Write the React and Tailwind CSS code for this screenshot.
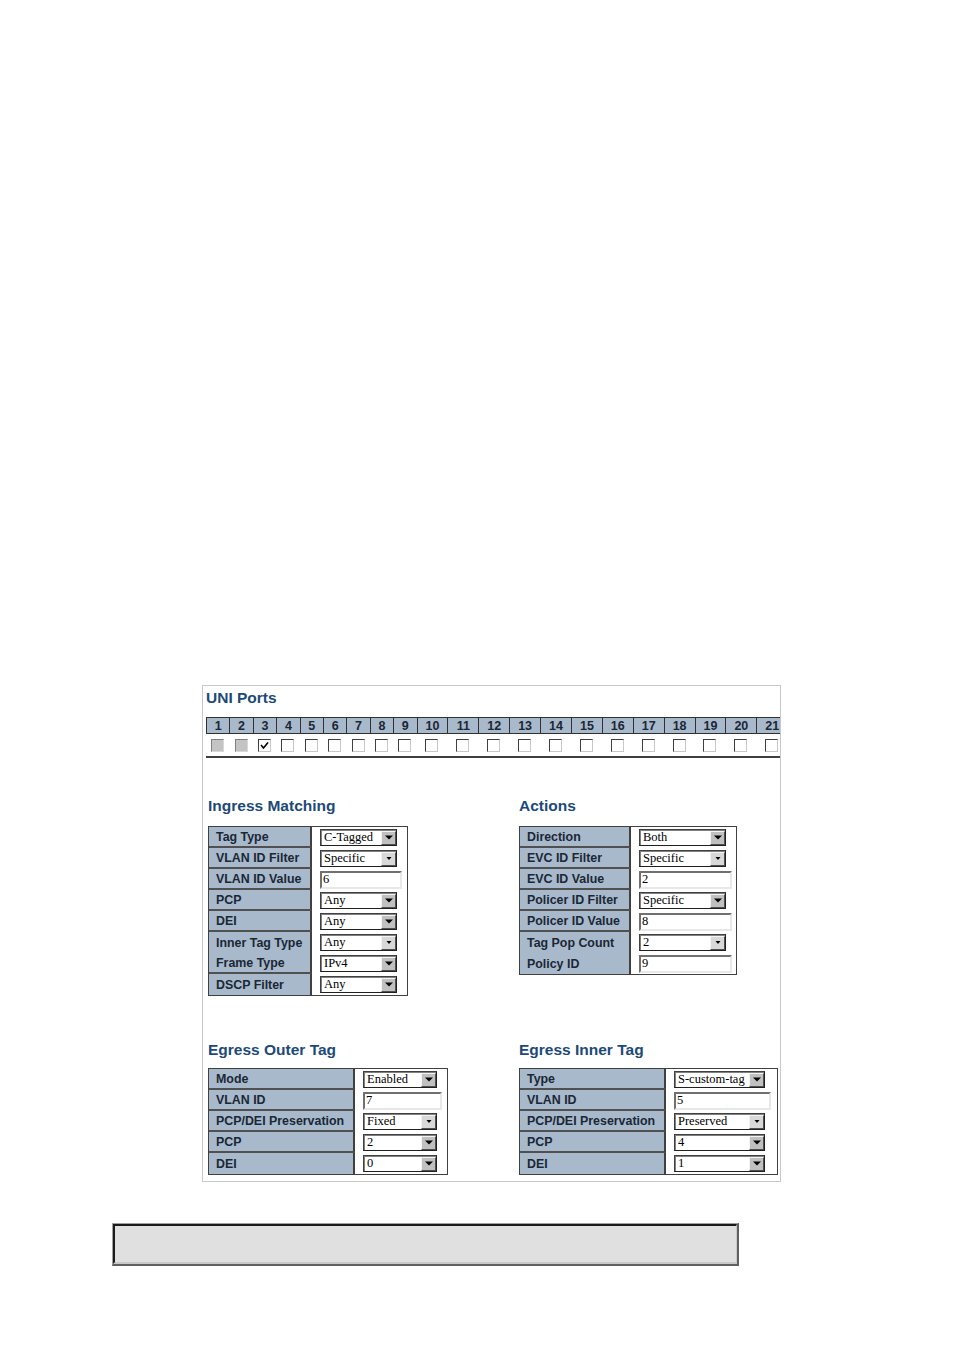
import React from 'react';

const ports = Array.from({ length: 21 }, (_, i) => i + 1);

const ingress = [
  { label: 'Tag Type', kind: 'select', value: 'C-Tagged' },
  { label: 'VLAN ID Filter', kind: 'select', value: 'Specific', light: true },
  { label: 'VLAN ID Value', kind: 'input', value: '6' },
  { label: 'PCP', kind: 'select', value: 'Any' },
  { label: 'DEI', kind: 'select', value: 'Any' },
  { label: 'Inner Tag Type', kind: 'select', value: 'Any', light: true, joined: true },
  { label: 'Frame Type', kind: 'select', value: 'IPv4' },
  { label: 'DSCP Filter', kind: 'select', value: 'Any' },
];

const actions = [
  { label: 'Direction', kind: 'select', value: 'Both' },
  { label: 'EVC ID Filter', kind: 'select', value: 'Specific', light: true },
  { label: 'EVC ID Value', kind: 'input', value: '2' },
  { label: 'Policer ID Filter', kind: 'select', value: 'Specific' },
  { label: 'Policer ID Value', kind: 'input', value: '8' },
  { label: 'Tag Pop Count', kind: 'select', value: '2', light: true, joined: true },
  { label: 'Policy ID', kind: 'input', value: '9' },
];

const egressOuter = [
  { label: 'Mode', kind: 'select', value: 'Enabled' },
  { label: 'VLAN ID', kind: 'input', value: '7' },
  { label: 'PCP/DEI Preservation', kind: 'select', value: 'Fixed', light: true },
  { label: 'PCP', kind: 'select', value: '2' },
  { label: 'DEI', kind: 'select', value: '0' },
];

const egressInner = [
  { label: 'Type', kind: 'select', value: 'S-custom-tag' },
  { label: 'VLAN ID', kind: 'input', value: '5' },
  { label: 'PCP/DEI Preservation', kind: 'select', value: 'Preserved', light: true },
  { label: 'PCP', kind: 'select', value: '4' },
  { label: 'DEI', kind: 'select', value: '1' },
];

function Checkbox({ state }) {
  if (state === 'disabled') {
    return <div className="w-[13px] h-[13px] bg-[#c4c4c4] border border-t-[#808080] border-l-[#808080] border-b-[#d8d8d8] border-r-[#d8d8d8]" />;
  }
  return (
    <div className="w-[13px] h-[13px] bg-white border border-t-[#404040] border-l-[#404040] border-b-[#c8c8c8] border-r-[#c8c8c8] flex items-center justify-center">
      {state === 'checked' && (
        <svg width="9" height="9" viewBox="0 0 9 9">
          <polyline points="1,4 3.5,7 8,1.5" fill="none" stroke="#000" strokeWidth="1.6" />
        </svg>
      )}
    </div>
  );
}

function Select({ value, light, width }) {
  return (
    <div className={`${width} h-[17px] flex items-center bg-white border border-t-[#404040] border-l-[#404040] border-b-[#202020] border-r-[#202020] shadow-[inset_1px_1px_0_#808080]`}>
      <span className="flex-1 pl-[3px] text-[12.5px] leading-[13px] text-black font-['Liberation_Serif',serif] whitespace-nowrap overflow-hidden">{value}</span>
      <div className={`w-[15px] h-[14px] shrink-0 flex items-center justify-center border border-t-[#f4f4f4] border-l-[#f4f4f4] border-b-[#505050] border-r-[#505050] ${light ? 'bg-[#d8d8d8]' : 'bg-[#c0c0c0]'}`}>
        <svg width="8" height="5" viewBox="0 0 8 5">
          <polygon points={light ? '1.5,1 6.5,1 4,4' : '0,0.5 8,0.5 4,4.5'} fill="#000" />
        </svg>
      </div>
    </div>
  );
}

function TextInput({ value, width }) {
  return (
    <div className={`${width} h-[18px] bg-white border-2 border-t-[#707070] border-l-[#707070] border-b-[#e8e8e8] border-r-[#e8e8e8] flex items-center`}>
      <span className="pl-[1px] text-[12.5px] leading-[13px] text-black font-['Liberation_Serif',serif]">{value}</span>
    </div>
  );
}

function ConfigTable({ rows, labelW, valueW, selectW, inputW }) {
  return (
    <div className="flex flex-col border border-[#404040] w-fit">
      {rows.map((r, i) => {
        const last = i === rows.length - 1;
        return (
          <div key={r.label} className="flex h-[21px]">
            <div className={`${labelW} shrink-0 bg-[#a7b9cb] border-r-2 border-r-[#404040] ${!last && !r.joined ? 'border-b-2 border-b-[#505050]' : ''} flex items-center pl-[7px] pt-[1px] text-[12.4px] font-bold text-[#1b2735] font-['Liberation_Sans',Arial,sans-serif] whitespace-nowrap`}>
              {r.label}
            </div>
            <div className={`${valueW} shrink-0 bg-white flex items-center pl-[8px]`}>
              {r.kind === 'select'
                ? <Select value={r.value} light={r.light} width={selectW} />
                : <TextInput value={r.value} width={inputW} />}
            </div>
          </div>
        );
      })}
    </div>
  );
}

function Title({ children }) {
  return (
    <div className="h-[20px] leading-[20px] text-[15.5px] font-bold text-[#1c4a78] font-['Liberation_Sans',Arial,sans-serif]">
      {children}
    </div>
  );
}

export default function App() {
  return (
    <div className="min-h-[1350px] bg-white pt-[685px]">
      <div className="ml-[202px] w-[579px] h-[497px] border border-[#c8c8c8] overflow-hidden">
        <div className="pl-[3px] h-[24px] leading-[24px] text-[15.5px] font-bold text-[#1c4a78] font-['Liberation_Sans',Arial,sans-serif]">
          UNI Ports
        </div>

        <div className="ml-[3px] mt-[7px] w-[574px] border-b-2 border-[#404040]">
          <div className="flex h-[17px] border-t border-b border-[#303030] border-l bg-[#a7b9cb]">
            {ports.map((p, i) => (
              <div
                key={p}
                className={`${i < 9 ? 'w-[23.4px]' : 'w-[30.9px]'} shrink-0 border-r border-[#303030] flex items-center justify-center pt-[1px] text-[12.5px] font-bold text-[#1b2735] font-['Liberation_Sans',Arial,sans-serif]`}
              >
                {p}
              </div>
            ))}
          </div>
          <div className="flex h-[22px] items-center">
            {ports.map((p, i) => (
              <div key={p} className={`${i < 9 ? 'w-[23.4px]' : 'w-[30.9px]'} shrink-0 flex justify-center`}>
                <Checkbox state={p < 3 ? 'disabled' : p === 3 ? 'checked' : 'off'} />
              </div>
            ))}
          </div>
        </div>

        <div className="flex items-start mt-[38px] pl-[5px]">
          <div className="w-[311px] shrink-0">
            <Title>Ingress Matching</Title>
            <div className="mt-[10px]">
              <ConfigTable rows={ingress} labelW="w-[103px]" valueW="w-[95px]" selectW="w-[77px]" inputW="w-[82px]" />
            </div>
          </div>
          <div>
            <Title>Actions</Title>
            <div className="mt-[10px]">
              <ConfigTable rows={actions} labelW="w-[111px]" valueW="w-[105px]" selectW="w-[87px]" inputW="w-[93px]" />
            </div>
          </div>
        </div>

        <div className="flex items-start mt-[44px] pl-[5px]">
          <div className="w-[311px] shrink-0">
            <Title>Egress Outer Tag</Title>
            <div className="mt-[8px]">
              <ConfigTable rows={egressOuter} labelW="w-[146px]" valueW="w-[92px]" selectW="w-[74px]" inputW="w-[79px]" />
            </div>
          </div>
          <div>
            <Title>Egress Inner Tag</Title>
            <div className="mt-[8px]">
              <ConfigTable rows={egressInner} labelW="w-[146px]" valueW="w-[111px]" selectW="w-[91px]" inputW="w-[97px]" />
            </div>
          </div>
        </div>
      </div>

      <div className="ml-[112px] mt-[41px] w-[627px] h-[43px] border-t border-l border-[#a0a0a0] border-b-2 border-r-2 border-b-[#606060] border-r-[#606060]">
        <div className="h-full bg-[#e0e0e0] border-t-2 border-l-2 border-[#1a1a1a] border-b-2 border-r border-b-[#c8c8c8] border-r-[#c8c8c8]" />
      </div>
    </div>
  );
}
